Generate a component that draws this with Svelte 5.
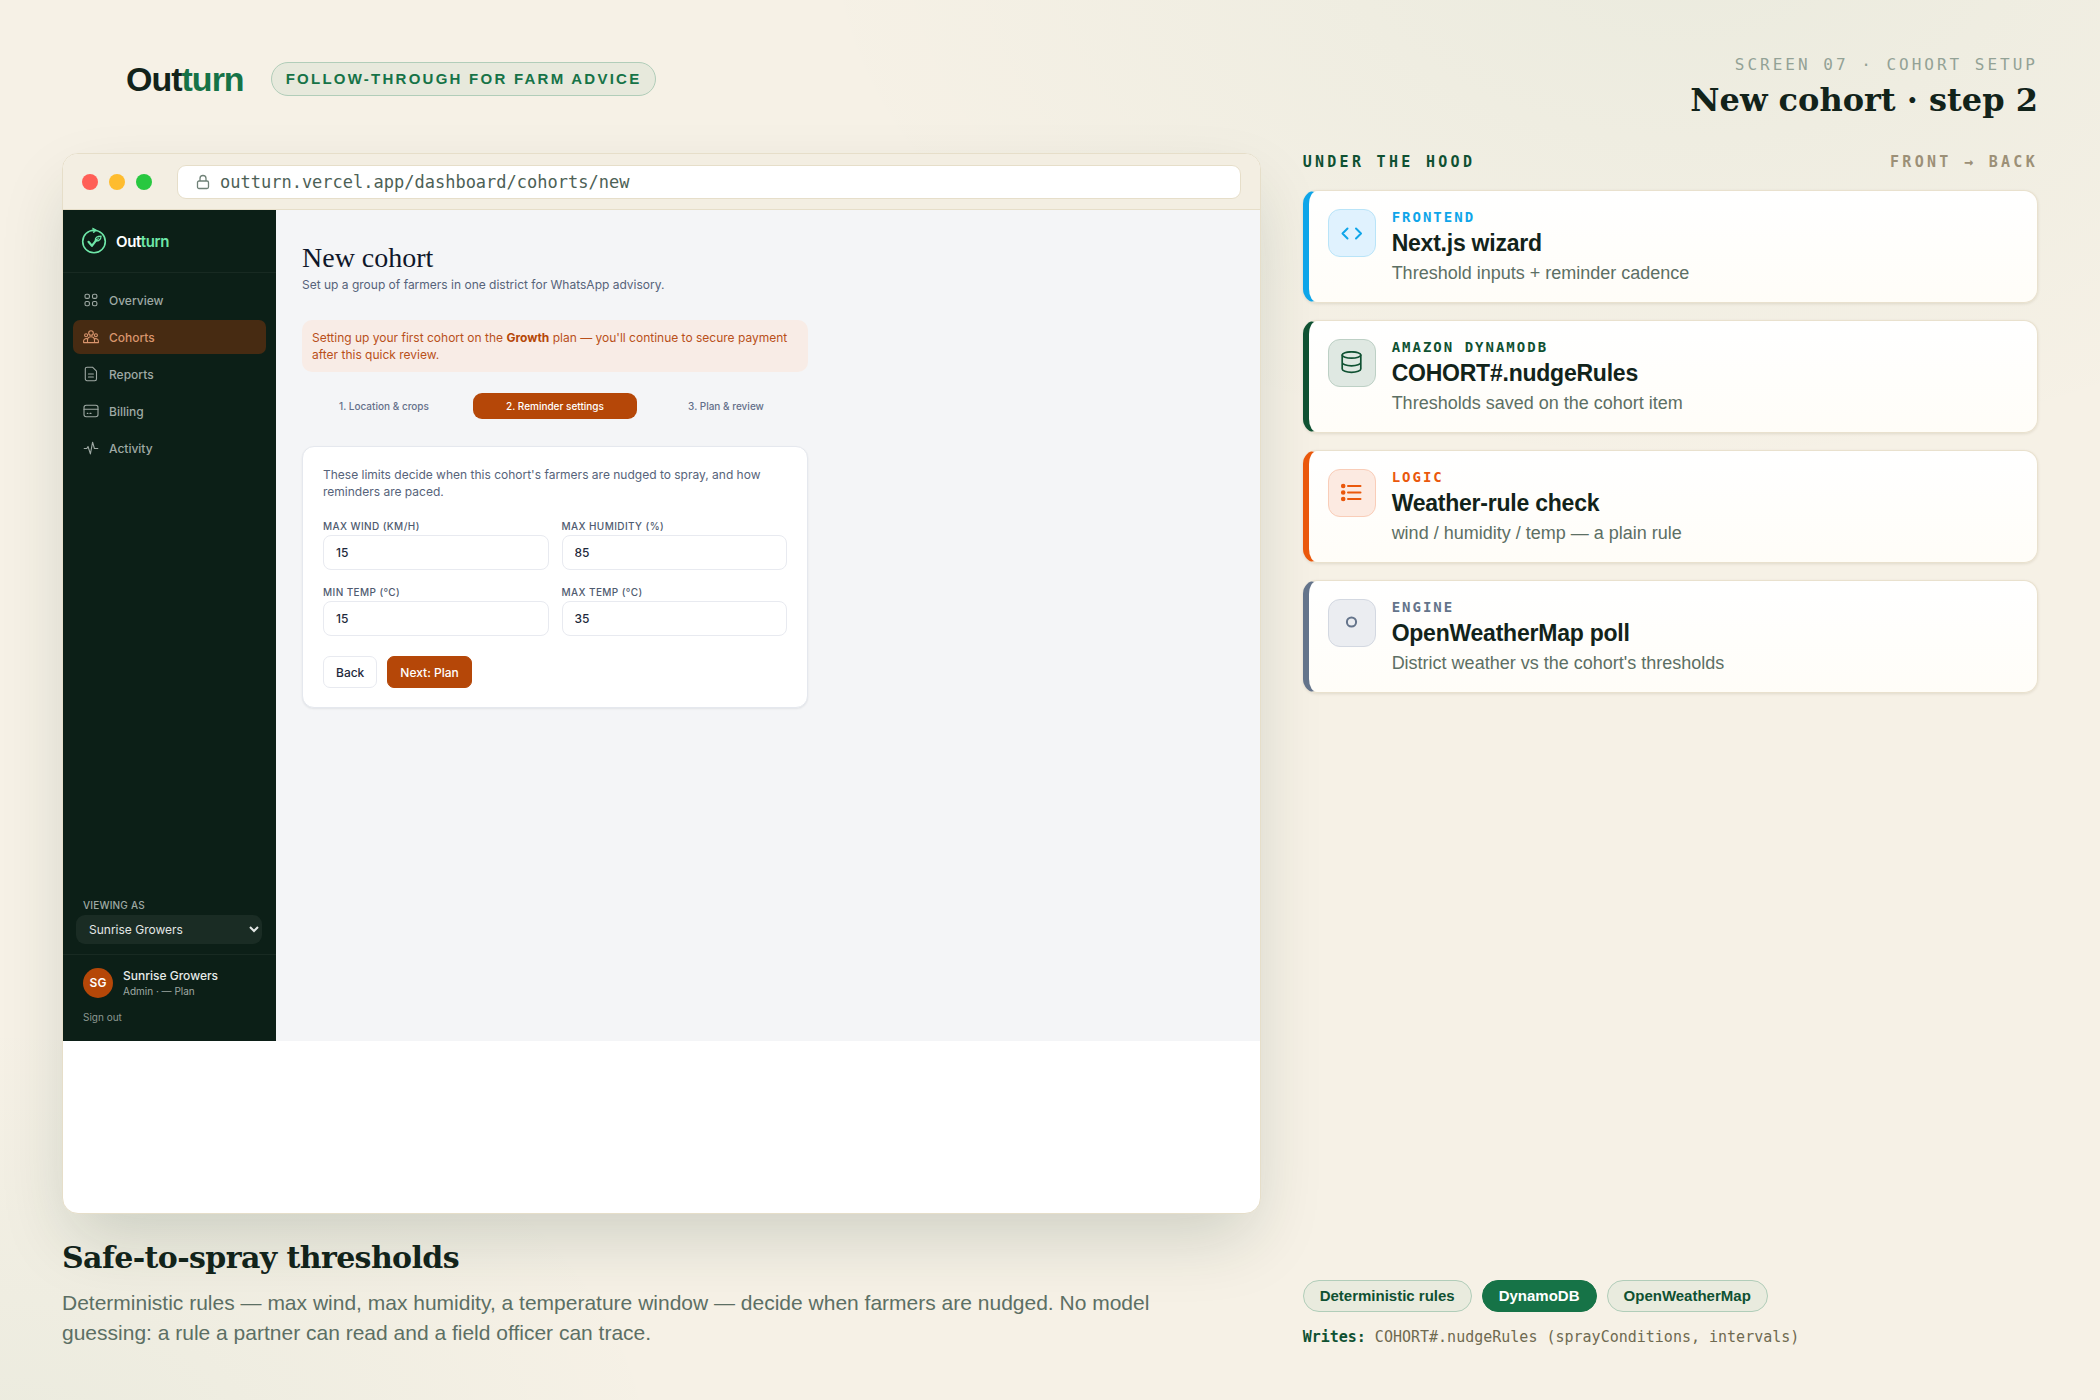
<script lang="ts">
	let maxWind = $state(15);
	let maxHumidity = $state(85);
	let minTemp = $state(15);
	let maxTemp = $state(35);
	let org = $state('Sunrise Growers');

	const nav = ['Overview', 'Cohorts', 'Reports', 'Billing', 'Activity'];
	const steps = ['1. Location & crops', '2. Reminder settings', '3. Plan & review'];

	const layers = [
		{ kind: 'frontend', tag: 'Frontend', title: 'Next.js wizard', text: 'Threshold inputs + reminder cadence' },
		{ kind: 'dynamo', tag: 'Amazon DynamoDB', title: 'COHORT#.nudgeRules', text: 'Thresholds saved on the cohort item' },
		{ kind: 'logic', tag: 'Logic', title: 'Weather-rule check', text: 'wind / humidity / temp — a plain rule' },
		{ kind: 'engine', tag: 'Engine', title: 'OpenWeatherMap poll', text: "District weather vs the cohort's thresholds" }
	];
</script>

<div class="page">
	<header class="top">
		<div class="brand">
			<span class="wordmark">Out<b>turn</b></span>
			<span class="slogan">Follow-through for farm advice</span>
		</div>
		<div class="screen">
			<p>Screen 07 · Cohort setup</p>
			<h1>New cohort · step 2</h1>
		</div>
	</header>

	<div class="columns">
		<section class="left">
			<div class="window">
				<div class="chrome">
					<i class="dot red"></i>
					<i class="dot yellow"></i>
					<i class="dot green"></i>
					<div class="url">
						<svg width="14" height="16" viewBox="0 0 14 16" fill="none" stroke="#6f8177" stroke-width="1.3">
							<rect x="1.5" y="7" width="11" height="7.5" rx="1.5" />
							<path d="M4 7V4.5a3 3 0 0 1 6 0V7" />
						</svg>
						<span>outturn.vercel.app/dashboard/cohorts/new</span>
					</div>
				</div>

				<!-- dashboard -->
				<div class="app">
					<aside>
						<div class="logo">
							<svg width="26" height="28" viewBox="0 0 26 28" fill="none" stroke="#6ee7a8" stroke-width="1.6" stroke-linecap="round" stroke-linejoin="round">
								<circle cx="13" cy="14.500" r="11.300" />
								<path d="M12 1.200l3.400 1.900-2.600 2.600z" fill="#6ee7a8" stroke-width=".8" />
								<path d="M7.500 14.800l3.400 4 4.600-6" stroke-width="2.200" />
								<path d="M14.300 14c-.4-3.300 1.700-4.900 5.800-4.900-.2 3.300-2.200 5.100-5.800 4.900z" stroke-width="1.200" />
								<path d="M14.500 13.800l3.400-3" stroke-width="1" />
							</svg>
							<span>Out<b>turn</b></span>
						</div>
						<nav>
							{#each nav as item}
								<a href="#{item.toLowerCase()}" class:active={item === 'Cohorts'}>
									<svg width="16" height="16" viewBox="0 0 16 16" fill="none" stroke="currentColor" stroke-width="1.1" stroke-linecap="round" stroke-linejoin="round">
										{#if item === 'Overview'}
											<rect x="2" y="2.200" width="4.400" height="4.200" rx="1.500" />
											<rect x="9.500" y="2.200" width="4.400" height="4.200" rx="1.500" />
											<rect x="2" y="9.500" width="4.400" height="4.200" rx="1.500" />
											<rect x="9.500" y="9.500" width="4.400" height="4.200" rx="1.500" />
										{:else if item === 'Cohorts'}
											<circle cx="8" cy="4" r="2.300" />
											<circle cx="3.100" cy="6.200" r="1.500" />
											<circle cx="12.900" cy="6.200" r="1.500" />
											<path d="M4.500 13.600v-2.300a3.500 3.500 0 0 1 7 0v2.300zM4.300 9.800c-2.200-.5-3.700.6-3.700 2.400v1.400h3.900M11.700 9.800c2.200-.5 3.700.6 3.700 2.400v1.400h-3.900" />
										{:else if item === 'Reports'}
											<path d="M4 1.200h5.500l4 4V13a1.700 1.700 0 0 1-1.700 1.700H4A1.700 1.700 0 0 1 2.300 13V2.900A1.700 1.700 0 0 1 4 1.200zM5.400 8h5M5.400 11h5" />
										{:else if item === 'Billing'}
											<rect x="1" y="2.300" width="14" height="11.400" rx="2.200" />
											<path d="M1 6.200h14M4.300 10.400h.6M7 10.400h1" />
										{:else}
											<path d="M1.200 8.500h2.600l1.200-2 2.400 7.400L9.600 2.200l1.800 6.300h3.400" />
										{/if}
									</svg>
									{item}
								</a>
							{/each}
						</nav>
						<div class="viewing">
							<label for="org">Viewing as</label>
							<select id="org" bind:value={org}>
								<option>Sunrise Growers</option>
							</select>
						</div>
						<div class="account">
							<div class="user">
								<span class="avatar">SG</span>
								<div>
									<p class="name">Sunrise Growers</p>
									<p class="role">Admin · — Plan</p>
								</div>
							</div>
							<button class="signout">Sign out</button>
						</div>
					</aside>

					<main>
						<h2>New cohort</h2>
						<p class="lead">Set up a group of farmers in one district for WhatsApp advisory.</p>

						<div class="wizard">
							<p class="banner">
								Setting up your first cohort on the <b>Growth</b> plan — you'll continue to secure payment after this quick review.
							</p>
							<ol class="steps">
								{#each steps as step, i}
									<li class:current={i === 1}>{step}</li>
								{/each}
							</ol>
							<form onsubmit={(e) => e.preventDefault()}>
								<p>These limits decide when this cohort's farmers are nudged to spray, and how reminders are paced.</p>
								<div class="fields">
									<label>Max wind (km/h)<input type="number" bind:value={maxWind} /></label>
									<label>Max humidity (%)<input type="number" bind:value={maxHumidity} /></label>
									<label>Min temp (°C)<input type="number" bind:value={minTemp} /></label>
									<label>Max temp (°C)<input type="number" bind:value={maxTemp} /></label>
								</div>
								<div class="actions">
									<button type="button">Back</button>
									<button type="submit" class="primary">Next: Plan</button>
								</div>
							</form>
						</div>
					</main>
				</div>
			</div>

			<div class="caption">
				<h3>Safe-to-spray thresholds</h3>
				<p>
					Deterministic rules — max wind, max humidity, a temperature window — decide when farmers are nudged. No model
					guessing: a rule a partner can read and a field officer can trace.
				</p>
			</div>
		</section>

		<section class="right">
			<div class="hood">
				<span>Under the hood</span>
				<span class="dir">Front → Back</span>
			</div>
			{#each layers as layer}
				<article class={layer.kind}>
					<div class="icon">
						<svg width="24" height="24" viewBox="0 0 24 24" fill="none" stroke="currentColor" stroke-width="2" stroke-linecap="round" stroke-linejoin="round">
							{#if layer.kind === 'frontend'}
								<path d="M7.500 7.500l-5 5 5 5M16 7.500l5 5-5 5" />
							{:else if layer.kind === 'dynamo'}
								<ellipse cx="11.500" cy="4" rx="9.300" ry="3.200" stroke-width="1.700" />
								<path d="M2.200 4v14c0 1.800 4 3.300 9.300 3.300s9.300-1.500 9.300-3.300V4M2.200 11.500c0 1.800 4 3.300 9.300 3.300s9.300-1.500 9.300-3.300" stroke-width="1.700" />
							{:else if layer.kind === 'logic'}
								<path d="M8 5h12.500M8 11.500h12.500M8 18h12.500" />
								<circle cx="3.200" cy="5" r="1.300" fill="currentColor" />
								<circle cx="3.200" cy="11.500" r="1.300" fill="currentColor" />
								<circle cx="3.200" cy="18" r="1.300" fill="currentColor" />
							{:else}
								<circle cx="11.500" cy="11" r="4.600" />
							{/if}
						</svg>
					</div>
					<div>
						<p class="tag">{layer.tag}</p>
						<h4>{layer.title}</h4>
						<p class="text">{layer.text}</p>
					</div>
				</article>
			{/each}
			<footer>
				<ul>
					<li>Deterministic rules</li>
					<li class="solid">DynamoDB</li>
					<li>OpenWeatherMap</li>
				</ul>
				<p><b>Writes:</b> COHORT#.nudgeRules (sprayConditions, intervals)</p>
			</footer>
		</section>
	</div>
</div>

<style>
	:global(body) {
		background: #f6f1e6;
	}

	.page,
	.page * {
		box-sizing: border-box;
	}

	.page {
		--sans: 'Liberation Sans', Arial, sans-serif;
		--serif: 'DejaVu Serif', serif;
		--mono: 'DejaVu Sans Mono', monospace;
		--ink: #12231a;
		display: flex;
		flex-direction: column;
		min-height: 100vh;
		padding: 54px 62px 52px;
		font-family: var(--sans);
		color: var(--ink);
		background:
			radial-gradient(1100px 680px at 80% -5%, rgba(22, 115, 71, 0.05), transparent 80%),
			radial-gradient(900px 600px at 0% 105%, rgba(22, 115, 71, 0.05), transparent 75%),
			#f6f1e6;
	}

	h1,
	h2,
	h3,
	h4,
	p,
	ul,
	ol {
		margin: 0;
		padding: 0;
	}

	ul,
	ol {
		list-style: none;
	}

	/* header */
	.top {
		display: flex;
		justify-content: space-between;
		align-items: flex-start;
		height: 99px;
	}

	.brand {
		display: flex;
		align-items: center;
		gap: 27px;
		padding: 5px 0 0 64px;
	}

	.wordmark {
		font-size: 34px;
		font-weight: 700;
		letter-spacing: -1px;
		line-height: 40px;
	}

	.wordmark b {
		color: #167347;
	}

	.slogan {
		padding: 0 14px;
		border: 1px solid #b1cdb9;
		border-radius: 17px;
		background: #e7e9dc;
		color: #167347;
		font-size: 15px;
		font-weight: 700;
		letter-spacing: 0.15em;
		line-height: 32px;
		text-transform: uppercase;
	}

	.screen {
		text-align: right;
	}

	.screen p {
		color: #93a296;
		font-family: var(--mono);
		font-size: 16px;
		letter-spacing: 3px;
		line-height: 22px;
		text-transform: uppercase;
	}

	.screen h1 {
		font-family: var(--serif);
		font-size: 32px;
		line-height: 48px;
	}

	.columns {
		display: grid;
		flex: 1;
		grid-template-columns: 163fr 100fr;
		gap: 42px;
	}

	.left,
	.right {
		display: flex;
		flex-direction: column;
		min-width: 0;
	}

	/* browser window */
	.window {
		flex: 1;
		overflow: hidden;
		border: 1px solid #e6dec9;
		border-radius: 16px;
		background: #fff;
		box-shadow: 0 30px 70px -10px rgba(18, 50, 35, 0.18);
	}

	.chrome {
		display: flex;
		align-items: center;
		gap: 11px;
		height: 56px;
		padding: 0 19px;
		border-bottom: 1px solid #e6dec9;
		background: #f3eee2;
	}

	.dot {
		width: 16px;
		height: 16px;
		border-radius: 50%;
	}

	.red {
		background: #ff5f57;
	}

	.yellow {
		background: #febc2e;
	}

	.green {
		background: #28c840;
	}

	.url {
		display: flex;
		flex: 1;
		align-items: center;
		gap: 10px;
		height: 34px;
		margin-left: 14px;
		padding-left: 18px;
		border: 1px solid #e6dec9;
		border-radius: 9px;
		background: #fff;
		color: #4d6156;
		font-family: var(--mono);
		font-size: 17px;
	}

	.app {
		display: grid;
		grid-template-columns: 213px 1fr;
		aspect-ratio: 1440 / 1000;
		background: #f4f5f7;
		font-family: Inter, sans-serif;
		font-size: 12px;
	}

	/* sidebar */
	aside {
		display: flex;
		flex-direction: column;
		background: #0c1f17;
		color: #9fa9a4;
	}

	.logo {
		display: flex;
		align-items: center;
		gap: 9px;
		height: 63px;
		padding-left: 18px;
		border-bottom: 1px solid #182a22;
		color: #fff;
		font-size: 15px;
		font-weight: 600;
		letter-spacing: -0.02em;
	}

	.logo b {
		color: #6ee7a8;
		font-weight: 600;
	}

	nav {
		display: flex;
		flex: 1;
		flex-direction: column;
		gap: 3px;
		padding: 10px;
	}

	nav a {
		display: flex;
		align-items: center;
		gap: 10px;
		height: 34px;
		padding-left: 10px;
		border-radius: 7px;
		color: #9fa9a4;
		font-weight: 500;
		text-decoration: none;
	}

	nav a.active {
		background: #472b12;
		color: #d9956d;
	}

	.viewing {
		display: flex;
		flex-direction: column;
		padding: 0 14px 10px 13px;
	}

	.viewing label {
		padding-left: 7px;
		font-size: 10px;
		font-weight: 500;
		letter-spacing: 0.02em;
		line-height: 20px;
		text-transform: uppercase;
	}

	select {
		height: 29px;
		padding: 0 0 0 9px;
		border: 0;
		border-radius: 9px;
		background: #1a2c24;
		color: #e3e7e5;
		font: 12px Inter, sans-serif;
	}

	.account {
		padding: 13px 20px 16px;
		border-top: 1px solid #182a22;
	}

	.user {
		display: flex;
		align-items: center;
		gap: 10px;
	}

	.avatar {
		width: 30px;
		border-radius: 50%;
		background: #b54708;
		color: #fff;
		font-weight: 600;
		line-height: 30px;
		text-align: center;
	}

	.name {
		color: #e7ebe9;
		font-weight: 500;
		line-height: 16px;
	}

	.role {
		font-size: 10px;
		line-height: 14px;
	}

	.signout {
		display: block;
		margin-top: 11px;
		padding: 0;
		border: 0;
		background: none;
		color: #8b9791;
		font: 10px/16px Inter, sans-serif;
	}

	/* wizard */
	main {
		padding: 30px 26px;
	}

	h2 {
		color: #0f172a;
		font: 500 28px/36px 'Liberation Serif', serif;
	}

	.lead {
		color: #56637a;
		line-height: 18px;
	}

	.wizard {
		display: flex;
		flex-direction: column;
		gap: 21px;
		max-width: 506px;
		margin-top: 26px;
	}

	.banner {
		padding: 9px 10px;
		border-radius: 10px;
		background: #f8ece6;
		color: #b9501a;
		line-height: 17px;
	}

	.banner b {
		color: #b54708;
	}

	.steps {
		display: grid;
		grid-template-columns: repeat(3, 1fr);
		gap: 7px;
		margin-bottom: 6px;
	}

	.steps li {
		border-radius: 9px;
		color: #64708a;
		font-size: 10px;
		font-weight: 500;
		line-height: 26px;
		text-align: center;
	}

	.steps .current {
		background: #b54708;
		color: #fff;
	}

	form {
		padding: 19px 20px;
		border: 1px solid #e5e8ee;
		border-radius: 12px;
		background: #fff;
		box-shadow: 0 1px 2px rgba(15, 23, 42, 0.08);
	}

	form p {
		color: #56637a;
		line-height: 17px;
	}

	.fields {
		display: grid;
		grid-template-columns: 1fr 1fr;
		gap: 13px;
		margin: 17px 0 20px;
	}

	.fields label {
		color: #4f5b70;
		font-size: 10px;
		font-weight: 500;
		letter-spacing: 0.04em;
		line-height: 18px;
		text-transform: uppercase;
	}

	input {
		display: block;
		width: 100%;
		height: 35px;
		padding: 0 12px;
		border: 1px solid #e8eaf0;
		border-radius: 8px;
		color: #1e293b;
		font: 500 12px Inter, sans-serif;
		appearance: textfield;
	}

	.actions {
		display: flex;
		gap: 10px;
	}

	.actions button {
		height: 32px;
		padding: 0 12px;
		border: 1px solid #e8eaf0;
		border-radius: 7px;
		background: #fff;
		color: #1e293b;
		font: 500 12px Inter, sans-serif;
	}

	.actions .primary {
		border-color: #b54708;
		background: #b54708;
		color: #fff;
	}

	/* caption below the window */
	.caption {
		padding-top: 22px;
	}

	.caption h3 {
		font-family: var(--serif);
		font-size: 30px;
		letter-spacing: -0.02em;
		line-height: 44px;
	}

	.caption p {
		max-width: 1100px;
		margin-top: 8px;
		color: #5c6f64;
		font-size: 21px;
		line-height: 30px;
	}

	/* under the hood */
	.right {
		gap: 17px;
	}

	.hood {
		display: flex;
		justify-content: space-between;
		margin-top: -1px;
		padding-bottom: 1px;
		color: #0f5132;
		font-family: var(--mono);
		font-size: 15px;
		font-weight: 700;
		letter-spacing: 0.22em;
		line-height: 20px;
		text-transform: uppercase;
	}

	.hood .dir {
		color: #9c9077;
	}

	article {
		display: flex;
		gap: 16px;
		height: 113px;
		padding: 18px 20px 18px 19px;
		border: 1px solid #e9e1ce;
		border-left: 6px solid var(--accent);
		border-radius: 14px;
		background: linear-gradient(#fff, #fffdf8);
		box-shadow: 0 1px 3px rgba(70, 55, 20, 0.12);
	}

	.frontend {
		--accent: #0ea5e9;
		--tint: #e0f2fe;
		--line: #b9e4f8;
	}

	.dynamo {
		--accent: #0f5132;
		--tint: #dfe8e2;
		--line: #bdd0c5;
	}

	.logic {
		--accent: #ea580c;
		--tint: #fceae1;
		--line: #f9cdb8;
	}

	.engine {
		--accent: #64748b;
		--tint: #ebedf1;
		--line: #d3d8e1;
	}

	.icon {
		display: grid;
		place-items: center;
		width: 48px;
		height: 48px;
		border: 1px solid var(--line);
		border-radius: 12px;
		background: var(--tint);
		color: var(--accent);
	}

	.tag {
		color: var(--accent);
		font-family: var(--mono);
		font-size: 14px;
		font-weight: 700;
		letter-spacing: 2px;
		line-height: 16px;
		text-transform: uppercase;
	}

	h4 {
		font-size: 23px;
		letter-spacing: -0.01em;
		line-height: 36px;
	}

	.text {
		color: #5c6f64;
		font-size: 18px;
		line-height: 24px;
	}

	footer {
		margin-top: auto;
	}

	footer ul {
		display: flex;
		gap: 10px;
	}

	footer li {
		padding: 0 16px;
		border: 1px solid #b1cdb9;
		border-radius: 16px;
		background: #e9ebde;
		color: #0f5132;
		font-size: 15px;
		font-weight: 700;
		line-height: 30px;
	}

	footer .solid {
		border-color: #167347;
		background: #167347;
		color: #fff;
	}

	footer p {
		margin-top: 14px;
		color: #6f6a50;
		font-family: var(--mono);
		font-size: 15px;
		line-height: 22px;
	}

	footer b {
		color: #0f5132;
	}
</style>
